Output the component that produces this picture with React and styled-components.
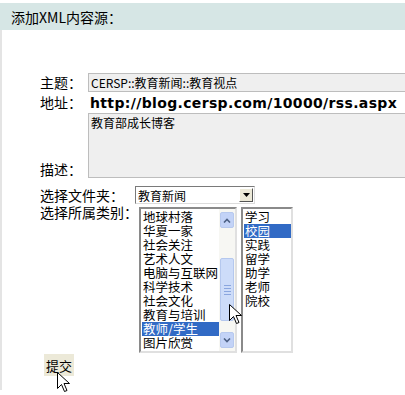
import React from "react"
import styled, { createGlobalStyle } from "styled-components"

const GlobalStyle = createGlobalStyle`
  html, body {
    margin: 0;
    padding: 0;
    background: #fff;
    overflow: hidden;
  }
  body {
    font-family: "Noto Sans CJK SC", "DejaVu Sans", sans-serif;
    font-size: 13px;
    color: #000;
  }
`

const Page = styled.div`
  position: relative;
  width: 405px;
  height: 395px;
  overflow: hidden;
  padding-top: 3px;
  box-sizing: border-box;
`

const Header = styled.div`
  height: 27px;
  background: #d6e6e5;
  padding-left: 11px;
  display: flex;
  align-items: center;
  font-size: 14px;
`

const Body = styled.div`
  border-left: 2px solid #e4e4e4;
  padding: 43px 0 0 38px;
  height: 360px;
  box-sizing: border-box;
`

const Row = styled.div`
  display: flex;
  align-items: ${p => p.align || "center"};
  height: ${p => p.h}px;
  margin-top: ${p => p.mt || 0}px;
`

const Label = styled.span`
  width: ${p => p.w}px;
  flex: none;
  font-size: 14px;
  line-height: 17px;
  white-space: nowrap;
  align-self: ${p => p.self || "auto"};
`

const TextBox = styled.div`
  width: 330px;
  height: 19px;
  flex: none;
  box-sizing: border-box;
  background: #efefef;
  border: 1px solid #bdbdbd;
  padding: 1px 2px;
  font-size: 12px;
  line-height: 15px;
  white-space: nowrap;
`

const Url = styled.span`
  font-family: "DejaVu Sans", Verdana, sans-serif;
  font-weight: bold;
  font-size: 14px;
  letter-spacing: 0.35px;
  padding-left: 2px;
  white-space: nowrap;
`

const TextArea = styled.div`
  width: 330px;
  height: 65px;
  flex: none;
  box-sizing: border-box;
  background: #efefef;
  border: 1px solid #bdbdbd;
  padding: 1px 2px;
  font-size: 12px;
  line-height: 15px;
`

const Select = styled.div`
  width: 120px;
  height: 18px;
  box-sizing: border-box;
  border: 1px solid #7a7a7a;
  border-right-color: #dcdcdc;
  border-bottom-color: #dcdcdc;
  display: flex;
  align-items: center;
  justify-content: space-between;
  padding-left: 2px;
  font-size: 12px;
  background: #fff;
`

const DropButton = styled.div`
  width: 14px;
  height: 14px;
  margin-right: 1px;
  box-sizing: border-box;
  background: #ece9d8;
  border: 1px solid #fff;
  border-right-color: #555;
  border-bottom-color: #555;
  display: flex;
  align-items: center;
  justify-content: center;
`

const Lists = styled.div`
  display: flex;
  gap: 4px;
  margin-top: 3px;
`

const ListBox = styled.div`
  width: ${p => p.w}px;
  height: 146px;
  box-sizing: border-box;
  border: 2px solid #8a8a8a;
  border-right-color: #e0e0e0;
  border-bottom-color: #e0e0e0;
  display: flex;
  background: #fff;
`

const Items = styled.div`
  flex: 1;
  padding-top: 1px;
  padding-left: 1px;
`

const Item = styled.div`
  height: 14px;
  line-height: 14px;
  font-size: 12.5px;
  padding-left: 1px;
  white-space: nowrap;
  background: ${p => (p.selected ? "#316ac5" : "transparent")};
  color: ${p => (p.selected ? "#fff" : "#000")};
`

const ScrollBar = styled.div`
  width: 16px;
  flex: none;
  background: #f7f7f3;
  display: flex;
  flex-direction: column;
  padding: 3px 0 3px 0;
  box-sizing: border-box;
`

const ScrollBtn = styled.div`
  height: 14px;
  margin: 0 1px;
  border-radius: 2px;
  background: #c3d3f7;
  border: 1px solid #b7c9ee;
  display: flex;
  align-items: center;
  justify-content: center;
`

const Track = styled.div`
  flex: 1;
  display: flex;
  flex-direction: column;
  justify-content: flex-end;
  padding-bottom: 11px;
`

const Thumb = styled.div`
  height: 61px;
  margin: 0 1px;
  border-radius: 2px;
  background: #cddcf9;
  border: 1px solid #b5c8ee;
  display: flex;
  flex-direction: column;
  align-items: center;
  justify-content: center;
  gap: 2px;
`

const Grip = styled.div`
  width: 7px;
  height: 1px;
  background: #8aa6df;
`

const SubmitButton = styled.div`
  margin: 1px 0 0 4px;
  width: 30px;
  height: 22px;
  background: #ece9d8;
  display: flex;
  align-items: center;
  justify-content: center;
  font-size: 13px;
`

const Cursor = styled.svg`
  position: absolute;
  left: ${p => p.x}px;
  top: ${p => p.y}px;
`

const Chevron = ({ up }) => (
  <svg width="8" height="5" viewBox="0 0 8 5">
    <path
      d={up ? "M1 4.5 L4 1.5 L7 4.5" : "M1 0.5 L4 3.5 L7 0.5"}
      fill="none"
      stroke="#4d6185"
      strokeWidth="1.6"
    />
  </svg>
)

const Arrow = ({ x, y }) => (
  <Cursor x={x} y={y} width="13" height="21" viewBox="0 0 13 21">
    <path
      d="M0.5 0.5 L0.5 16.5 L4.5 12.5 L7.5 19.5 L10 18.5 L7 11.5 L12.5 11.5 Z"
      fill="#fff"
      stroke="#000"
      strokeWidth="1"
    />
  </Cursor>
)

const categories = [
  "地球村落",
  "华夏一家",
  "社会关注",
  "艺术人文",
  "电脑与互联网",
  "科学技术",
  "社会文化",
  "教育与培训",
  "教师/学生",
  "图片欣赏",
]

const types = ["学习", "校园", "实践", "留学", "助学", "老师", "院校"]

export default function App() {
  return (
    <Page>
      <GlobalStyle />
      <Header>添加XML内容源：</Header>
      <Body>
        <Row h={19}>
          <Label w={48}>主题：</Label>
          <TextBox>CERSP::教育新闻::教育视点</TextBox>
        </Row>
        <Row h={21}>
          <Label w={48}>地址：</Label>
          <Url>http://blog.cersp.com/10000/rss.aspx</Url>
        </Row>
        <Row h={65} align="flex-end">
          <Label w={48} self="flex-end">描述：</Label>
          <TextArea>教育部成长博客</TextArea>
        </Row>
        <Row h={18} mt={8}>
          <Label w={95}>选择文件夹：</Label>
          <Select>
            教育新闻
            <DropButton>
              <svg width="7" height="4" viewBox="0 0 7 4">
                <path d="M0 0 L7 0 L3.5 4 Z" fill="#000" />
              </svg>
            </DropButton>
          </Select>
        </Row>
        <Row h={149} align="flex-start">
          <Label w={99}>选择所属类别：</Label>
          <Lists>
            <ListBox w={98}>
              <Items>
                {categories.map(c => (
                  <Item key={c} selected={c === "教师/学生"}>
                    {c}
                  </Item>
                ))}
              </Items>
              <ScrollBar>
                <ScrollBtn>
                  <Chevron up />
                </ScrollBtn>
                <Track>
                  <Thumb>
                    <Grip />
                    <Grip />
                    <Grip />
                    <Grip />
                  </Thumb>
                </Track>
                <ScrollBtn>
                  <Chevron />
                </ScrollBtn>
              </ScrollBar>
            </ListBox>
            <ListBox w={52}>
              <Items>
                {types.map(t => (
                  <Item key={t} selected={t === "校园"}>
                    {t}
                  </Item>
                ))}
              </Items>
            </ListBox>
          </Lists>
        </Row>
        <SubmitButton>提交</SubmitButton>
      </Body>
      <Arrow x={229} y={304} />
      <Arrow x={57} y={372} />
    </Page>
  )
}
